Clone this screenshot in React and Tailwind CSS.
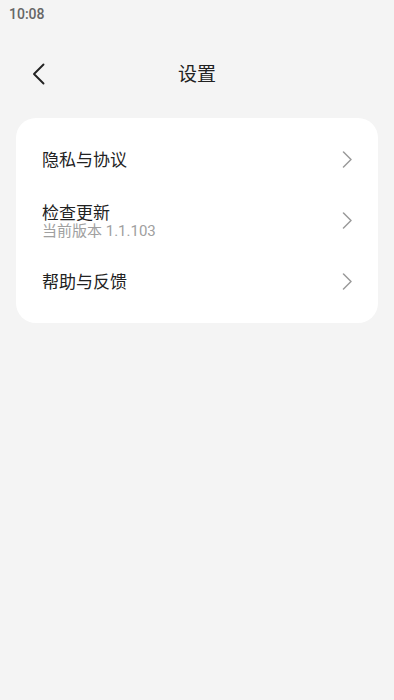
const font = { fontFamily: 'Roboto, "Noto Sans CJK SC", sans-serif' };

const items = [
  { title: '隐私与协议' },
  { title: '检查更新', sub: '当前版本 1.1.103' },
  { title: '帮助与反馈' },
];

function Chevron() {
  return (
    <svg width="11" height="17" viewBox="0 0 11 17" fill="none" className="text-[#9a9a9a]">
      <path d="M1.5 1 L9 8.5 L1.5 16" stroke="currentColor" strokeWidth="1.5" strokeLinecap="round" strokeLinejoin="round" />
    </svg>
  );
}

export default function App() {
  return (
    <div className="min-h-[700px] w-full bg-[#f4f4f4]" style={font}>
      {/* status bar */}
      <div className="h-[28px] pl-[9px] flex items-center text-[14px] font-medium text-[#666]">10:08</div>

      {/* header */}
      <div className="relative h-[92px] flex items-center justify-center">
        <button className="absolute left-[31px] top-[35px] text-[#222]">
          <svg width="15" height="22" viewBox="0 0 15 22" fill="none">
            <path d="M12.5 1.5 L3 11 L12.5 20.5" stroke="currentColor" strokeWidth="1.9" strokeLinecap="round" strokeLinejoin="round" />
          </svg>
        </button>
        <span className="text-[19px] text-[#222] mt-[3px]">设置</span>
      </div>

      {/* card */}
      <div className="mx-[16px] -mt-[2px] rounded-[20px] bg-white py-[11px]">
        {items.map((it) => (
          <div key={it.title} className="h-[61px] flex items-center pl-[26px] pr-[25px]">
            <div className="flex-1 flex flex-col">
              <span className="text-[17px] leading-[20px] text-[#222]">{it.title}</span>
              {it.sub && <span className="text-[15px] leading-[16px] text-[#a0a0a0]">{it.sub}</span>}
            </div>
            <Chevron />
          </div>
        ))}
      </div>
    </div>
  );
}
